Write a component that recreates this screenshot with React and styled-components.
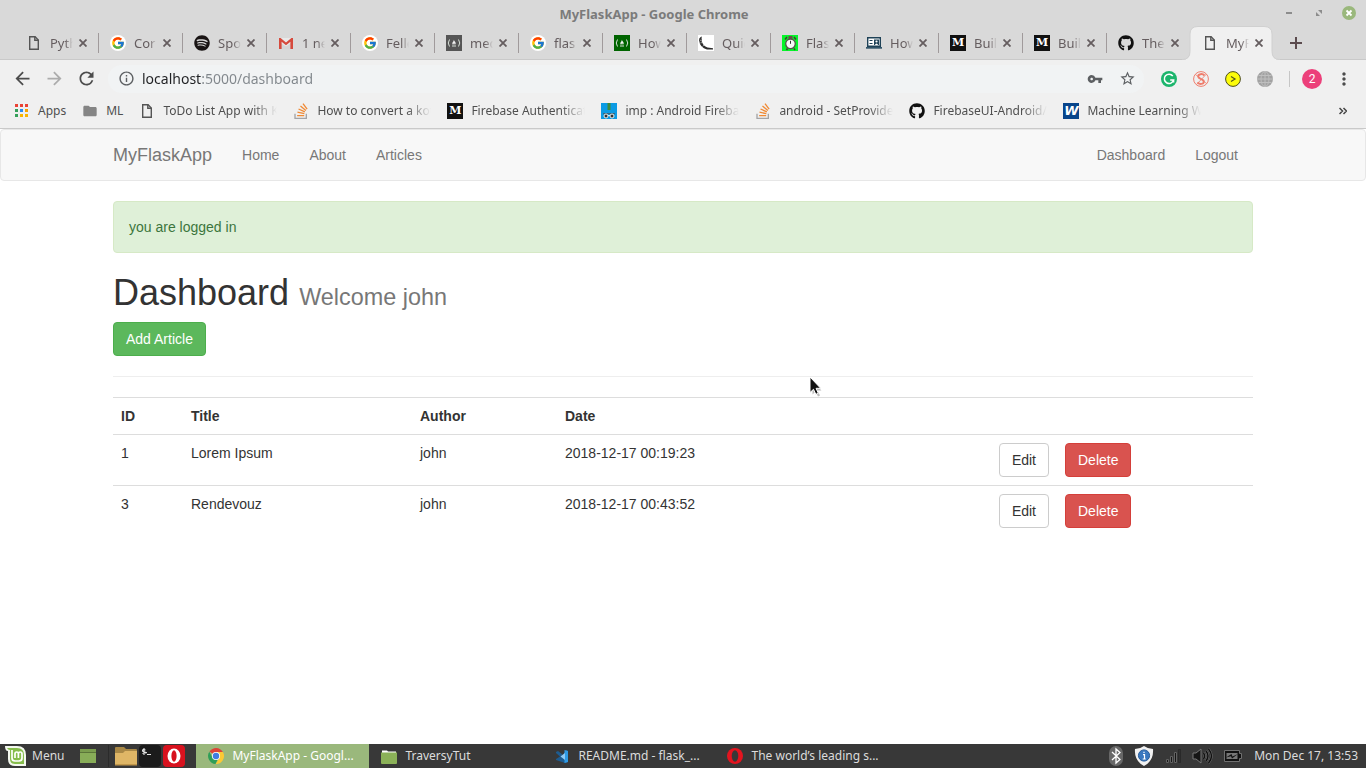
import React from "react";
import styled, { createGlobalStyle, css } from "styled-components";
import { FcGoogle } from "react-icons/fc";
import { FaSpotify, FaGithub } from "react-icons/fa";
import {
  MdArrowBack,
  MdArrowForward,
  MdRefresh,
  MdOutlineInfo,
  MdVpnKey,
  MdStarBorder,
  MdMoreVert,
  MdFolder,
} from "react-icons/md";

const ui = `"Noto Sans", "Open Sans", sans-serif`;
const web = `"Liberation Sans", Arial, sans-serif`;

const GlobalStyle = createGlobalStyle`
  *, *::before, *::after { box-sizing: border-box; }
  body { margin: 0; background: #fff; color: #333; font-family: ${web}; font-size: 14px; line-height: 20px; }
  svg { display: block; flex: none; }
  button, input { font: inherit; }
`;

const Screen = styled.div`
  display: flex;
  flex-direction: column;
  min-height: 100vh;
`;

/* ---------- browser frame ---------- */

const Browser = styled.header`
  background: #f0f0f0;
  font-family: ${ui};
  border-bottom: 1px solid #c9c9c9;
`;

const TitleBar = styled.div`
  display: flex;
  align-items: center;
  height: 26px;
  padding: 0 10px 0 26px;
  background: #d9d9d9;
`;

const WindowTitle = styled.div`
  flex: 1;
  padding-top: 2px;
  text-align: center;
  font-size: 13px;
  font-weight: 700;
  color: #7b7b7b;
`;

const WindowControls = styled.div`
  display: flex;
  gap: 16px;
`;

const PlainButton = styled.button`
  display: flex;
  align-items: center;
  justify-content: center;
  flex: none;
  padding: 0;
  border: 0;
  background: none;
  color: inherit;
`;

const TabStrip = styled.div`
  display: flex;
  height: 34px;
  padding-left: 15px;
  background: #d9d9d9;
  box-shadow: inset 0 -1px #c9c9c9;
`;

const TabBox = styled.div`
  position: relative;
  display: flex;
  align-items: center;
  flex: 0 1 84px;
  min-width: 0;
  padding: 0 12px 0 11px;
  color: #655d5f;

  &::after {
    content: "";
    position: absolute;
    right: 0;
    top: 7px;
    width: 1px;
    height: 20px;
    background: ${(p) => (p.$divider ? "#a09a9b" : "transparent")};
  }
`;

const ActiveShape = styled.svg`
  position: absolute;
  left: -9px;
  top: 0;
`;

const TabMain = styled.button`
  position: relative;
  display: flex;
  align-items: center;
  gap: 8px;
  flex: 1;
  min-width: 0;
  padding: 0 0 1px;
  border: 0;
  background: none;
  color: inherit;
  font-size: 13px;
`;

const Fade = styled.span`
  flex: 1;
  min-width: 0;
  overflow: hidden;
  white-space: nowrap;
  text-align: left;
  mask-image: linear-gradient(to left, transparent, #000 ${(p) => p.$fade}px);
`;

const CloseTab = styled(PlainButton)`
  position: relative;
  width: 8px;
  height: 16px;
  margin-left: 6px;
`;

const NewTab = styled(PlainButton)`
  width: 14px;
  margin-left: 14px;
  color: #5b4b4e;
`;

const Toolbar = styled.div`
  display: flex;
  align-items: center;
  height: 37px;
  padding: 0 12px;
  color: #4c4c4c;
`;

const NavButtons = styled.div`
  display: flex;
  gap: 12px;
  margin-right: 12px;
`;

const ToolButton = styled(PlainButton)`
  width: 20px;
  height: 20px;
  ${(p) => p.$dim && css`color: #acacac;`}
`;

const AddressBar = styled.div`
  display: flex;
  align-items: center;
  flex: 1;
  height: 28px;
  padding: 0 7px 0 8px;
  border-radius: 14px;
  background: #f1f3f4;
  color: #5c5f62;
`;

const AddressInput = styled.input`
  flex: 1;
  min-width: 0;
  margin: 0 6px;
  padding: 0;
  border: 0;
  outline: 0;
  font-size: 14px;
  color: transparent;
  caret-color: #222;
  background: linear-gradient(to right, #202124 60px, #80868b 60px);
  background-clip: text;
`;

const AddressActions = styled.div`
  display: flex;
  gap: 12px;
`;

const Extensions = styled.div`
  display: flex;
  gap: 16px;
  margin-left: 17px;
`;

const ToolDivider = styled.div`
  width: 1px;
  height: 16px;
  margin: 0 12px 0 16px;
  background: #c6c6c6;
`;

const Profile = styled(PlainButton)`
  width: 20px;
  height: 20px;
  margin-right: 12px;
  border-radius: 50%;
  background: #ec407a;
  color: #fff;
  font-family: Roboto, sans-serif;
  font-size: 12px;
`;

const BookmarkBar = styled.nav`
  display: flex;
  align-items: center;
  gap: 16px;
  height: 31px;
  padding: 0 14px 4px;
`;

const Bookmark = styled.a`
  display: flex;
  align-items: center;
  gap: 8px;
  min-width: 0;
  color: #4f4f4f;
  font-size: 12px;
  text-decoration: none;
  ${(p) => p.$wide && css`flex: 0 1 138px;`}
`;

const MoreBookmarks = styled(PlainButton)`
  margin-left: auto;
  width: 18px;
  height: 20px;
`;

/* ---------- favicons ---------- */

const LetterIcon = styled.span`
  display: flex;
  align-items: center;
  justify-content: center;
  flex: none;
  width: 16px;
  height: 16px;
  background: ${(p) => p.$bg};
  color: #fff;
  font: ${(p) => p.$font};
`;

const RoundWhite = styled.span`
  display: flex;
  align-items: center;
  justify-content: center;
  flex: none;
  width: 16px;
  height: 16px;
  border-radius: 50%;
  background: #fff;
`;

const FileIcon = () => (
  <svg width="16" height="16" fill="none" stroke="#555" strokeWidth="1.4">
    <path d="M3.7 1.7h5.4l3.2 3.3v9.3H3.7z" />
    <path d="M8.8 1.7v3.6h3.5" />
  </svg>
);
const GoogleIcon = () => (
  <RoundWhite>
    <FcGoogle size={14} />
  </RoundWhite>
);
const SpotifyIcon = () => <FaSpotify size={16} color="#191414" />;
const GithubIcon = () => <FaGithub size={16} color="#111" />;
const GmailIcon = () => (
  <svg width="16" height="16">
    <path d="M1 3h14v11H1z" fill="#e9e9e9" />
    <path d="M3 8l5 3.500L13 8v6H3z" fill="#d5d5d5" />
    <path d="M1 14V3h1.600L8 7.400 13.400 3H15v11h-2.600V6.700L8 10.300 3.600 6.700V14z" fill="#d64a3d" />
  </svg>
);
const CampIcon = ({ bg }) => (
  <svg width="16" height="16">
    <path d="M0 0h16v16H0z" fill={bg} />
    <path d="M3.500 4.500Q1 8 3.500 11.500M12.500 4.500Q15 8 12.500 11.500" fill="none" stroke="#d8e0d8" />
    <path d="M6 11h4" stroke="#d8e0d8" />
    <path d="M7.800 4.800c.2 1.200 1.900 2 1.900 3.500 0 .8-.4 1.400-1 1.700.2-.9-.4-1.300-.7-1.700-.2.600-.9.900-.6 1.700-.7-.3-1.100-.9-1.100-1.600 0-1.300 1.600-1.800 1.500-3.600z" fill="#f2f2f2" />
  </svg>
);
const FlaskIcon = () => (
  <svg width="16" height="16">
    <path d="M0 0h16v16H0z" fill="#fff" />
    <path d="M1 5Q1 2.500 4 1.500L3.500 3Q4 4 3.600 6 5 11 9.500 12.500l5.500.8v1.200H9Q2 13 1 5z" fill="#2d2d2d" />
    <path d="M2 4.500l1 1.500M2.300 8l1.800-.5M4.500 11.500L6 10" stroke="#ddd" strokeWidth=".6" />
  </svg>
);
const ClockIcon = () => (
  <svg width="16" height="16">
    <path d="M0 0h16v16H0z" fill="#05f52a" />
    <path d="M3 4.500l2-2.500M12 2l2 2.500M5.500 13.500L4.500 15M12 13.500l1 1.500" stroke="#4b3834" strokeWidth="1.500" />
    <path d="M6.500 1h4v3h-4z" fill="#6b4f49" />
    <circle cx="8.500" cy="8.800" r="4.800" fill="#f8f8f8" stroke="#5a504c" strokeWidth="1.300" />
    <path d="M8.500 5.800v3" stroke="#333" />
  </svg>
);
const LaptopIcon = () => (
  <svg width="16" height="16">
    <path d="M1.700 2.700h12.600v8.600H1.700z" fill="#fff" stroke="#1f4257" strokeWidth="1.400" />
    <path d="M0 12h16v1.700H0z" fill="#315468" />
    <path d="M3.500 5.500h3M3.500 8.500h3" stroke="#1f4257" />
    <path d="M8 4.500h5v5.500H8z" fill="#1f4257" />
    <circle cx="10.500" cy="6.500" r="1.100" fill="#fff" />
    <path d="M8.800 10q1.700-3 3.400 0z" fill="#fff" />
  </svg>
);
const MediumIcon = () => (
  <LetterIcon $bg="#111" $font={`700 11px/16px "DejaVu Serif", serif`}>M</LetterIcon>
);
const WeeblyIcon = () => (
  <LetterIcon $bg="#08458b" $font={`italic 700 13px/16px "DejaVu Sans", sans-serif`}>W</LetterIcon>
);
const StackIcon = () => (
  <svg width="16" height="16" viewBox="0 0 24 24" fill="none" strokeWidth="2">
    <path d="M3 16v7h17v-7" stroke="#a4a4a6" />
    <path d="M15 1l6.200 8.300M11.200 4.500l8.100 6.600M8.300 9l9.500 4.300M6.700 13.800L17 16M6.200 19h10.600" stroke="#f08a35" />
  </svg>
);
const RobotIcon = () => (
  <svg width="16" height="16">
    <path d="M0 0h16v16H0z" fill="#0b9be4" />
    <path d="M6.500 0h3v7h-3z" fill="#3f8b3c" />
    <path d="M2 10.700h12" stroke="#475b66" />
    <g fill="#333" stroke="#e8e8e8">
      <circle cx="5" cy="13" r="2" />
      <circle cx="11" cy="13" r="2" />
    </g>
    <path d="M7.300 12.500h1.400" stroke="#fff" />
  </svg>
);
const AppsIcon = () => {
  const colors = ["#ea4335", "#ea4335", "#ea4335", "#34a05a", "#2b8cf0", "#f5a300", "#34a05a", "#f9b500", "#f9b500"];
  return (
    <svg width="16" height="16">
      {colors.map((c, i) => (
        <rect key={i} x={1 + (i % 3) * 5} y={1 + Math.floor(i / 3) * 5} width="3" height="3" fill={c} />
      ))}
    </svg>
  );
};
const FolderIcon = () => <MdFolder size={16} color="#858585" />;

/* ---------- extension icons ---------- */

const GrammarlyIcon = () => (
  <svg width="16" height="16">
    <circle cx="8" cy="8" r="8" fill="#1cb56c" />
    <path d="M11.800 5A4.700 4.700 0 1 0 12.600 9H9.200M12.600 8.500v3" fill="none" stroke="#fff" strokeWidth="1.500" />
  </svg>
);
const SnakeIcon = () => (
  <svg width="16" height="16" fill="none" stroke="#ef7d6c">
    <circle cx="8" cy="8" r="7.400" />
    <path d="M11.500 4.500C9.500 2.300 5 2.800 5.200 5.600S11 8 10.800 10.700 6.500 13.600 4.500 11.300" strokeWidth="2" />
    <path d="M2.500 3.500l11 9M3.500 13.500L13.500 3" strokeWidth=".8" />
  </svg>
);
const YellowIcon = () => (
  <svg width="16" height="16">
    <circle cx="8" cy="8" r="7.400" fill="#fdfd0a" stroke="#4d4d20" />
    <path d="M6 5.500l4 2.500-4 2.500" fill="none" stroke="#55551c" strokeWidth="1.200" />
  </svg>
);
const GlobeIcon = () => (
  <svg width="16" height="16">
    <circle cx="8" cy="8" r="8" fill="#a2a2a2" />
    <g fill="none" stroke="#bfbfbf">
      <ellipse cx="8" cy="8" rx="4" ry="7.500" />
      <path d="M8 0v16M0 8h16M1.500 4.500h13M1.500 11.500h13" />
    </g>
  </svg>
);

/* ---------- web page ---------- */

const Page = styled.main`
  position: relative;
  flex: 1;
`;

const Container = styled.div`
  max-width: 1170px;
  margin: 0 auto;
  padding: 0 15px;
`;

const Navbar = styled.nav`
  margin-bottom: 20px;
  border: 1px solid #e7e7e7;
  border-radius: 4px;
  background: #f8f8f8;
`;

const NavRow = styled(Container)`
  display: flex;
`;

const Brand = styled.a`
  padding: 15px 15px 15px 0;
  font-size: 18px;
  color: #777;
  text-decoration: none;
`;

const NavList = styled.ul`
  display: flex;
  margin: 0 0 0 ${(p) => (p.$right ? "auto" : "0")};
  padding: 0;
  list-style: none;
`;

const NavLink = styled.a`
  display: block;
  padding: 15px;
  color: #777;
  text-decoration: none;
`;

const Alert = styled.div`
  margin-bottom: 20px;
  padding: 15px;
  border: 1px solid #d6e9c6;
  border-radius: 4px;
  background: #dff0d8;
  color: #3c763d;
`;

const Heading = styled.h1`
  margin: 20px 0 10px;
  font-size: 36px;
  font-weight: 500;
  line-height: 39px;
`;

const Welcome = styled.small`
  font-size: 65%;
  font-weight: 400;
  line-height: 1;
  color: #777;
`;

const tones = {
  plain: ["#fff", "#ccc", "#333"],
  success: ["#5cb85c", "#4cae4c", "#fff"],
  danger: ["#d9534f", "#d43f3a", "#fff"],
};

const buttonLook = css`
  display: inline-block;
  padding: 6px 12px;
  border: 1px solid ${(p) => tones[p.$tone][1]};
  border-radius: 4px;
  background: ${(p) => tones[p.$tone][0]};
  color: ${(p) => tones[p.$tone][2]};
  font-size: 14px;
  line-height: 20px;
  text-decoration: none;
  vertical-align: top;
`;

const ButtonLink = styled.a`
  ${buttonLook}
`;

const Button = styled.button`
  ${buttonLook}
`;

const Rule = styled.hr`
  margin: 20px 0;
  border: 0;
  border-top: 1px solid #eee;
`;

const Table = styled.table`
  width: 100%;
  border-collapse: collapse;
  border-spacing: 0;
`;

const Column = styled.col`
  width: ${(p) => p.$share};
`;

const cell = css`
  padding: 8px;
  border-top: 1px solid #ddd;
  text-align: ${(p) => (p.$end ? "right" : "left")};
  vertical-align: top;
`;

const Th = styled.th`
  ${cell}
`;

const Td = styled.td`
  ${cell}
`;

const Pointer = styled.svg`
  position: absolute;
  left: 808px;
  top: 247px;
`;

/* ---------- desktop panel ---------- */

const Panel = styled.footer`
  display: flex;
  align-items: center;
  height: 24px;
  padding: 0 8px 0 5px;
  background: #383838;
  color: #dcdcdc;
  font-family: ${ui};
  font-size: 12px;
`;

const MenuButton = styled(PlainButton)`
  gap: 5px;
  margin-right: 16px;
`;

const Launchers = styled.div`
  display: flex;
  align-items: center;
  gap: 2px;
  margin: 0 11px 0 12px;
  padding-left: 6px;
  border-left: 1px solid #2b2b2b;
`;

const Tasks = styled.div`
  display: flex;
  flex: 1;
  min-width: 0;
`;

const Task = styled.button`
  display: flex;
  align-items: center;
  gap: 8px;
  flex: 0 1 173px;
  min-width: 0;
  height: 24px;
  padding: 0 12px;
  border: 0;
  background: ${(p) => (p.$active ? "#9ab87c" : "none")};
  color: ${(p) => (p.$active ? "#fff" : "#dcdcdc")};
  white-space: nowrap;
`;

const Tray = styled.div`
  display: flex;
  align-items: center;
  gap: 10px;
  margin-right: 11px;
`;

const MintIcon = () => (
  <svg width="22" height="22">
    <path d="M0 1h12q9 0 9 9v11H10Q3 21 3 14V6Q0 6 0 1z" fill="#f4f8ef" />
    <path d="M2 3h10q7 0 7 7v9h-9q-5 0-5-5V5Q3 5 2 3z" fill="#86bd4c" />
    <path d="M7 5v8q0 3 3 3h4q3 0 3-3V9q0-2-1.800-2T13.400 9v4M13.400 9q0-2-1.700-2T10 9v4" fill="none" stroke="#fff" strokeWidth="1.700" />
  </svg>
);
const DesktopIcon = () => (
  <svg width="16" height="14">
    <path d="M0 0h16v14H0z" fill="#88ad58" />
    <path d="M0 0h16v4H0z" fill="#7a9d4e" />
    <path d="M0 3.500h16" stroke="#5b7539" />
  </svg>
);
const FilesIcon = () => (
  <svg width="22" height="22">
    <path d="M0 3q0-1 1-1h8l2 2h10q1 0 1 1v6H0z" fill="#a98846" />
    <path d="M0 8h8l2-2h12v14H0z" fill="#dfb666" />
    <path d="M0 19h22v1.500H0z" fill="#c2974a" />
  </svg>
);
const TerminalIcon = () => (
  <svg width="22" height="22">
    <rect width="22" height="22" rx="4" fill="#1b1b1b" />
    <path d="M6.500 5Q3.500 4 3.500 5.500T6.500 7.300 3.500 8.500M5 3v7M8 9.500h4" fill="none" stroke="#e4e4e4" strokeWidth="1.100" />
  </svg>
);
const OperaSquare = () => (
  <svg width="22" height="22">
    <rect width="22" height="22" rx="4" fill="#d8121e" />
    <ellipse cx="11" cy="11" rx="6.500" ry="7.500" fill="#fff" />
    <ellipse cx="11" cy="11" rx="2.600" ry="5.800" fill="#d8121e" />
  </svg>
);
const ChromeIcon = () => (
  <svg width="16" height="16">
    <path d="M8 8L1.500 3.500A8 8 0 0 1 14.900 4H8z" fill="#dc4437" />
    <path d="M8 4h6.900A8 8 0 0 1 7.500 16L11.500 10z" fill="#fbc934" />
    <path d="M1.300 3.700L4.600 10l5 1.500L7.500 16A8 8 0 0 1 1.300 3.700z" fill="#2e9e57" />
    <circle cx="8" cy="8" r="4" fill="#fff" />
    <circle cx="8" cy="8" r="3.200" fill="#3f7de0" />
  </svg>
);
const GreenFolder = () => (
  <svg width="16" height="16">
    <path d="M1 4V2.500h5l1 1h8V5H1z" fill="#fff" />
    <path d="M0 4.500h16V15q0 1-1 1H1q-1 0-1-1z" fill="#8bb158" />
  </svg>
);
const CodeIcon = () => (
  <svg width="16" height="16">
    <path d="M2 4l2-1 5 4 3-5 2 1v11l-3 1-9-3V11l4-2.500L2 5z" fill="#1d5c91" />
    <path d="M10.500 2L14 3v11l-3.500 1z" fill="#2f9ae5" />
    <path d="M11 5v7L6.500 8.500z" fill="#8fcaf4" />
  </svg>
);
const OperaRing = () => (
  <svg width="16" height="16">
    <circle cx="8" cy="8" r="8" fill="#e3141f" />
    <ellipse cx="8" cy="8" rx="3.300" ry="5.800" fill="#383838" />
  </svg>
);
const BluetoothIcon = () => (
  <svg width="16" height="20">
    <rect x="1" width="14" height="20" rx="7" fill="#686868" />
    <path d="M4 6l8 7.500L8 17V3l4 3.500L4 14" fill="none" stroke="#fff" strokeWidth="1.300" />
  </svg>
);
const ShieldIcon = () => (
  <svg width="20" height="20">
    <path d="M10 0q4 3 9 3 1 12-9 17Q0 15 1 3q5 0 9-3z" fill="#f1f1f1" />
    <circle cx="10" cy="9.500" r="5.600" fill="#3a78bf" stroke="#265c9c" />
    <path d="M9 8.700h1.500V13M8.700 13h3M9.400 6.300h1.200" fill="none" stroke="#fff" strokeWidth="1.200" />
  </svg>
);
const SignalIcon = () => (
  <svg width="18" height="16">
    <path d="M2.500 11.500h2v3h-2zM6.500 8.500h2v6h-2zM10.500 4.500h2v10h-2z" fill="#161616" stroke="#626262" />
    <path d="M14.500 1.500h2v13h-2z" fill="#303030" stroke="#292929" />
  </svg>
);
const VolumeIcon = () => (
  <svg width="21" height="18">
    <path d="M1 6h3l5-4v14l-5-4H1z" fill="#151515" stroke="#777" />
    <path d="M11.500 6q2 3 0 6M14 4q4 5 0 10M16.500 2q6 7 0 14" fill="none" stroke="#777" strokeWidth="2.400" />
    <path d="M11.500 6q2 3 0 6M14 4q4 5 0 10M16.500 2q6 7 0 14" fill="none" stroke="#111" strokeWidth="1.500" />
  </svg>
);
const BatteryIcon = () => (
  <svg width="20" height="14">
    <path d="M1.500 1.500h15v3h2v5h-2v3h-15z" fill="#111" stroke="#707070" />
    <path d="M3.500 4h11v6h-11z" fill="#777" />
    <path d="M3 8.500L8.500 5l1 2.500L15 5 9 9.500 8 7.300z" fill="#111" />
  </svg>
);

/* ---------- data ---------- */

const tabs = [
  ["Pyth", <FileIcon />],
  ["Cor", <GoogleIcon />],
  ["Spo", <SpotifyIcon />],
  ["1 ne", <GmailIcon />],
  ["Felle", <GoogleIcon />],
  ["mec", <CampIcon bg="#555" />],
  ["flas", <GoogleIcon />],
  ["How", <CampIcon bg="#006400" />],
  ["Quic", <FlaskIcon />],
  ["Flas", <ClockIcon />],
  ["How", <LaptopIcon />],
  ["Buil", <MediumIcon />],
  ["Buil", <MediumIcon />],
  ["The", <GithubIcon />],
  ["MyF", <FileIcon />],
];

const bookmarks = [
  ["Apps", <AppsIcon />],
  ["ML", <FolderIcon />],
  ["ToDo List App with K", <FileIcon />],
  ["How to convert a kot", <StackIcon />],
  ["Firebase Authenticat", <MediumIcon />],
  ["imp : Android Firebas", <RobotIcon />],
  ["android - SetProvider", <StackIcon />],
  ["FirebaseUI-Android/", <GithubIcon />],
  ["Machine Learning W", <WeeblyIcon />],
];

const columnShares = ["6.14%", "20.09%", "12.72%", "30%", "13.86%", "17.19%"];

const articles = [
  { id: 1, title: "Lorem Ipsum", author: "john", date: "2018-12-17 00:19:23" },
  { id: 3, title: "Rendevouz", author: "john", date: "2018-12-17 00:43:52" },
];

const tasks = [
  ["MyFlaskApp - Googl...", <ChromeIcon />],
  ["TraversyTut", <GreenFolder />],
  ["README.md - flask_...", <CodeIcon />],
  ["The world’s leading s...", <OperaRing />],
];

function BrowserTab({ title, icon, active, divider }) {
  return (
    <TabBox $divider={divider}>
      {active && (
        <ActiveShape width="99" height="34">
          <path d="M0 34q8 0 8-8V8q0-7.500 8-7.500h66q8 0 8 7.500v18q0 8 8 8z" fill="#f0f0f0" />
          <path d="M0 33.500q8 0 8-8V8q0-7.500 8-7.500h66q8 0 8 7.500v17.500q0 8 8 8" fill="none" stroke="#d0d0d0" />
        </ActiveShape>
      )}
      <TabMain>
        {icon}
        <Fade $fade={8}>{title}</Fade>
      </TabMain>
      <CloseTab aria-label="Close tab">
        <svg width="8" height="8" stroke="currentColor" strokeWidth="1.800">
          <path d="M.5.5l7 7M7.500.5l-7 7" />
        </svg>
      </CloseTab>
    </TabBox>
  );
}

function BrowserFrame() {
  return (
    <Browser>
      <TitleBar>
        <WindowTitle>MyFlaskApp - Google Chrome</WindowTitle>
        <WindowControls>
          <PlainButton aria-label="Minimize">
            <svg width="14" height="14">
              <path d="M4 6h6v2H4z" fill="#8c8c8c" />
            </svg>
          </PlainButton>
          <PlainButton aria-label="Restore">
            <svg width="14" height="14" fill="#8c8c8c">
              <path d="M6 4h4v4zM4 6v4h4z" />
            </svg>
          </PlainButton>
          <PlainButton aria-label="Close">
            <svg width="14" height="14">
              <circle cx="7" cy="7" r="7" fill="#9ab87c" />
              <path d="M4.500 4.500l5 5M9.500 4.500l-5 5" stroke="#fff" strokeWidth="1.800" />
            </svg>
          </PlainButton>
        </WindowControls>
      </TitleBar>
      <TabStrip>
        {tabs.map(([title, icon], i) => (
          <BrowserTab
            key={i}
            title={title}
            icon={icon}
            active={i === tabs.length - 1}
            divider={i < tabs.length - 2}
          />
        ))}
        <NewTab aria-label="New tab">
          <svg width="12" height="12" stroke="currentColor" strokeWidth="2">
            <path d="M6 0v12M0 6h12" />
          </svg>
        </NewTab>
      </TabStrip>
      <Toolbar>
        <NavButtons>
          <ToolButton aria-label="Back"><MdArrowBack size={21} /></ToolButton>
          <ToolButton aria-label="Forward" $dim><MdArrowForward size={21} /></ToolButton>
          <ToolButton aria-label="Reload"><MdRefresh size={21} /></ToolButton>
        </NavButtons>
        <AddressBar>
          <ToolButton aria-label="Site information"><MdOutlineInfo size={17} /></ToolButton>
          <AddressInput aria-label="Address" defaultValue="localhost:5000/dashboard" />
          <AddressActions>
            <ToolButton aria-label="Saved passwords"><MdVpnKey size={16} /></ToolButton>
            <ToolButton aria-label="Bookmark this page"><MdStarBorder size={17} /></ToolButton>
          </AddressActions>
        </AddressBar>
        <Extensions>
          <PlainButton aria-label="Writing assistant"><GrammarlyIcon /></PlainButton>
          <PlainButton aria-label="Scraper"><SnakeIcon /></PlainButton>
          <PlainButton aria-label="Console"><YellowIcon /></PlainButton>
          <PlainButton aria-label="Globe"><GlobeIcon /></PlainButton>
        </Extensions>
        <ToolDivider />
        <Profile>2</Profile>
        <ToolButton aria-label="Browser menu"><MdMoreVert size={20} /></ToolButton>
      </Toolbar>
      <BookmarkBar>
        {bookmarks.map(([label, icon], i) => (
          <Bookmark key={label} href="#" $wide={i > 1}>
            {icon}
            {i > 1 ? <Fade $fade={24}>{label}</Fade> : <span>{label}</span>}
          </Bookmark>
        ))}
        <MoreBookmarks aria-label="More bookmarks">
          <svg width="8" height="8" fill="none" stroke="#444" strokeWidth="1.500">
            <path d="M.5 1l3 3-3 3M4.500 1l3 3-3 3" />
          </svg>
        </MoreBookmarks>
      </BookmarkBar>
    </Browser>
  );
}

function Dashboard() {
  return (
    <Page>
      <Navbar>
        <NavRow>
          <Brand href="#">MyFlaskApp</Brand>
          <NavList>
            {["Home", "About", "Articles"].map((t) => (
              <li key={t}><NavLink href="#">{t}</NavLink></li>
            ))}
          </NavList>
          <NavList $right>
            {["Dashboard", "Logout"].map((t) => (
              <li key={t}><NavLink href="#">{t}</NavLink></li>
            ))}
          </NavList>
        </NavRow>
      </Navbar>
      <Container>
        <Alert role="status">you are logged in</Alert>
        <Heading>
          Dashboard <Welcome>Welcome john</Welcome>
        </Heading>
        <ButtonLink href="#" $tone="success">Add Article</ButtonLink>
        <Rule />
        <Table>
          <colgroup>
            {columnShares.map((share, i) => (
              <Column key={i} $share={share} />
            ))}
          </colgroup>
          <thead>
            <tr>
              <Th>ID</Th>
              <Th>Title</Th>
              <Th>Author</Th>
              <Th>Date</Th>
              <Th />
              <Th />
            </tr>
          </thead>
          <tbody>
            {articles.map((a) => (
              <tr key={a.id}>
                <Td>{a.id}</Td>
                <Td>{a.title}</Td>
                <Td>{a.author}</Td>
                <Td>{a.date}</Td>
                <Td $end><ButtonLink href="#" $tone="plain">Edit</ButtonLink></Td>
                <Td><Button $tone="danger">Delete</Button></Td>
              </tr>
            ))}
          </tbody>
        </Table>
      </Container>
      <Pointer width="18" height="24">
        <path d="M3 4l9 9H8l2.500 5-2 1-2.500-5-3 3z" fill="#bbb" transform="translate(1.500 1.500)" />
        <path d="M2 1v15.500l3.500-3.200 2.300 5 2.500-1-2.200-5h4.600z" fill="#111" stroke="#fff" />
      </Pointer>
    </Page>
  );
}

function DesktopPanel() {
  return (
    <Panel>
      <MenuButton><MintIcon />Menu</MenuButton>
      <PlainButton aria-label="Show desktop"><DesktopIcon /></PlainButton>
      <Launchers>
        <PlainButton aria-label="Files"><FilesIcon /></PlainButton>
        <PlainButton aria-label="Terminal"><TerminalIcon /></PlainButton>
        <PlainButton aria-label="Opera"><OperaSquare /></PlainButton>
      </Launchers>
      <Tasks>
        {tasks.map(([label, icon], i) => (
          <Task key={label} $active={i === 0}>
            {icon}
            <span>{label}</span>
          </Task>
        ))}
      </Tasks>
      <Tray>
        <BluetoothIcon />
        <ShieldIcon />
        <SignalIcon />
        <VolumeIcon />
        <BatteryIcon />
      </Tray>
      <time dateTime="2018-12-17T13:53">Mon Dec 17, 13:53</time>
    </Panel>
  );
}

export default function App() {
  return (
    <Screen>
      <GlobalStyle />
      <BrowserFrame />
      <Dashboard />
      <DesktopPanel />
    </Screen>
  );
}
